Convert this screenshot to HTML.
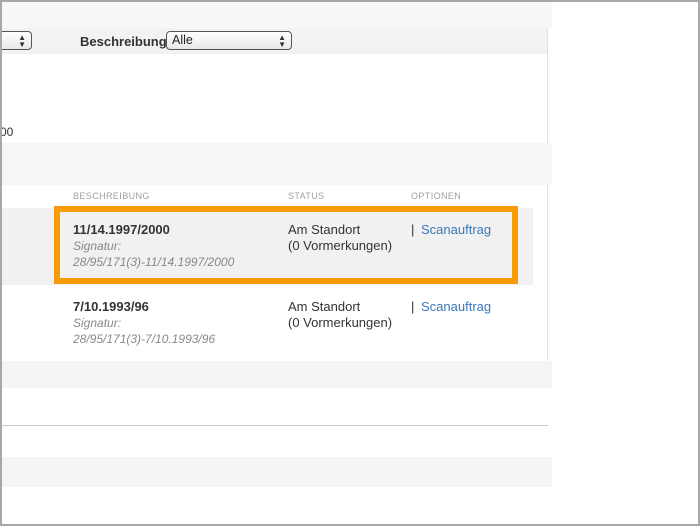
<!DOCTYPE html>
<html><head><meta charset="utf-8"><style>
*{margin:0;padding:0;box-sizing:border-box}
body{width:700px;height:526px;overflow:hidden;background:#fff;font-family:"Liberation Sans",sans-serif;position:relative}
.a{position:absolute}
.frame{position:absolute;left:0;top:0;width:700px;height:526px;border:2px solid #a8a8a8;pointer-events:none}
.t{font-size:13px;color:#333}
.sig{font-size:12px;color:#888;font-style:italic;line-height:16px}
.hd{font-size:9px;color:#a0a0a0;letter-spacing:.4px}
.lk{color:#3a78b8;margin-left:3px}
.sel{position:absolute;height:19px;border:1px solid #555;border-radius:4px;background:linear-gradient(#fff,#e8e8e8);font-size:12.5px;padding-left:5px;line-height:17px;color:#222}
.arr{position:absolute;right:5px;top:2px;font-size:8px;line-height:7px;color:#333}
</style></head><body>
<div class="a" style="left:0;top:0;width:552px;height:28px;background:#f7f7f7"></div>
<div class="a" style="left:0;top:28px;width:548px;height:26px;background:#f2f2f2;border-right:1px solid #e2e2e2"></div>
<div class="sel" style="left:-10px;top:31px;width:42px"><span class="arr">▲<br>▼</span></div>
<div class="a" style="left:80px;top:34px;font-size:13px;font-weight:bold;color:#333">Beschreibung</div>
<div class="sel" style="left:166px;top:31px;width:126px">Alle<span class="arr">▲<br>▼</span></div>
<div class="a" style="left:0;top:54px;width:548px;height:89px;background:#fff;border-right:1px solid #e2e2e2"></div>
<div class="a t" style="left:0;top:125px;font-size:12px">00</div>
<div class="a" style="left:0;top:143px;width:552px;height:42px;background:#f6f6f6"></div>
<div class="a" style="left:0;top:185px;width:548px;height:176px;background:#fff;border-right:1px solid #e2e2e2"></div>
<div class="a hd" style="left:73px;top:191px">BESCHREIBUNG</div>
<div class="a hd" style="left:288px;top:191px">STATUS</div>
<div class="a hd" style="left:411px;top:191px">OPTIONEN</div>
<div class="a" style="left:0;top:208px;width:533px;height:77px;background:#f1f1f1"></div>
<div class="a" style="left:54px;top:206px;width:464px;height:78px;border:6px solid #f99a0a"></div>
<div class="a t" style="left:73px;top:222px;font-weight:bold">11/14.1997/2000</div>
<div class="a sig" style="left:73px;top:238px">Signatur:<br>28/95/171(3)-11/14.1997/2000</div>
<div class="a t" style="left:288px;top:222px;line-height:16px">Am Standort<br>(0 Vormerkungen)</div>
<div class="a t" style="left:411px;top:222px">| <span class="lk">Scanauftrag</span></div>
<div class="a t" style="left:73px;top:299px;font-weight:bold">7/10.1993/96</div>
<div class="a sig" style="left:73px;top:315px">Signatur:<br>28/95/171(3)-7/10.1993/96</div>
<div class="a t" style="left:288px;top:299px;line-height:16px">Am Standort<br>(0 Vormerkungen)</div>
<div class="a t" style="left:411px;top:299px">| <span class="lk">Scanauftrag</span></div>
<div class="a" style="left:0;top:361px;width:552px;height:27px;background:#f5f5f5"></div>
<div class="a" style="left:0;top:425px;width:548px;height:1px;background:#c8c8c8"></div>
<div class="a" style="left:0;top:457px;width:552px;height:30px;background:#f5f5f5"></div>
<div class="frame"></div>
</body></html>
